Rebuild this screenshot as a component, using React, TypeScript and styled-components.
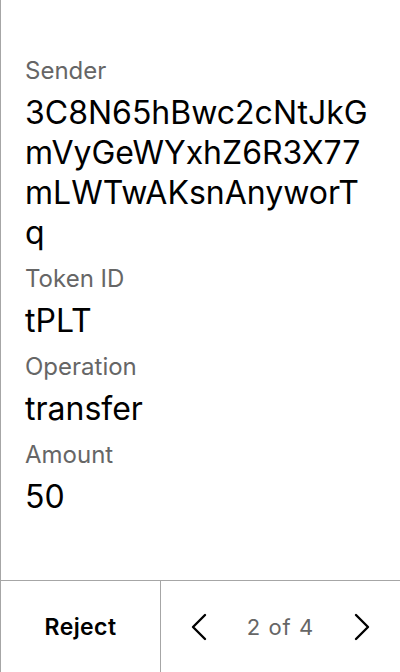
import React from "react";
import styled, { createGlobalStyle } from "styled-components";

const Global = createGlobalStyle`
  html, body { margin: 0; padding: 0; background: #fff; }
  body { font-family: Inter, "Noto Sans", sans-serif; }
  * { box-sizing: border-box; }
`;

const Panel = styled.div`
  width: 400px;
  height: 672px;
  display: flex;
  flex-direction: column;
  border-left: 1px solid #a6a6a6;
  background: #fff;
`;

const Content = styled.div`
  flex: 1;
  padding: 55px 28px 0 24px;
  display: flex;
  flex-direction: column;
`;

const Field = styled.div`
  display: flex;
  flex-direction: column;
  margin-bottom: 10px;
`;

const Label = styled.div`
  font-size: 24px;
  line-height: 32px;
  color: #666;
  margin-bottom: 6px;
`;

const Value = styled.div`
  font-size: 32px;
  line-height: 40px;
  color: #000;
  word-break: break-all;
`;

const Footer = styled.div`
  height: 92px;
  border-top: 1px solid #a6a6a6;
  display: grid;
  grid-template-columns: 160px 1fr;
`;

const RejectButton = styled.button`
  border: none;
  border-right: 1px solid #a6a6a6;
  background: transparent;
  font-family: inherit;
  font-size: 23px;
  font-weight: 600;
  letter-spacing: 0.4px;
  color: #000;
  padding: 0;
`;

const Pager = styled.div`
  display: flex;
  align-items: center;
  justify-content: space-between;
  padding: 0 30px 0 30px;
`;

const NavButton = styled.button`
  border: none;
  background: transparent;
  padding: 0;
  width: 16px;
  height: 28px;
  display: flex;
  align-items: center;
  justify-content: center;
`;

const PageText = styled.span`
  font-size: 22px;
  letter-spacing: 1px;
  color: #666;
`;

const Chevron = ({ dir }: { dir: "left" | "right" }) => (
  <svg width="16" height="28" viewBox="0 0 16 28" fill="none">
    <path
      d={dir === "left" ? "M14 2 L2 14 L14 26" : "M2 2 L14 14 L2 26"}
      stroke="#000"
      strokeWidth="2.4"
      strokeLinecap="round"
      strokeLinejoin="round"
    />
  </svg>
);

const fields = [
  { label: "Sender", value: "3C8N65hBwc2cNtJkGmVyGeWYxhZ6R3X77mLWTwAKsnAnyworTq" },
  { label: "Token ID", value: "tPLT" },
  { label: "Operation", value: "transfer" },
  { label: "Amount", value: "50" },
];

export default function App() {
  return (
    <>
      <Global />
      <Panel>
        <Content>
          {fields.map((f) => (
            <Field key={f.label}>
              <Label>{f.label}</Label>
              <Value>{f.value}</Value>
            </Field>
          ))}
        </Content>
        <Footer>
          <RejectButton>Reject</RejectButton>
          <Pager>
            <NavButton aria-label="Previous">
              <Chevron dir="left" />
            </NavButton>
            <PageText>2 of 4</PageText>
            <NavButton aria-label="Next">
              <Chevron dir="right" />
            </NavButton>
          </Pager>
        </Footer>
      </Panel>
    </>
  );
}
